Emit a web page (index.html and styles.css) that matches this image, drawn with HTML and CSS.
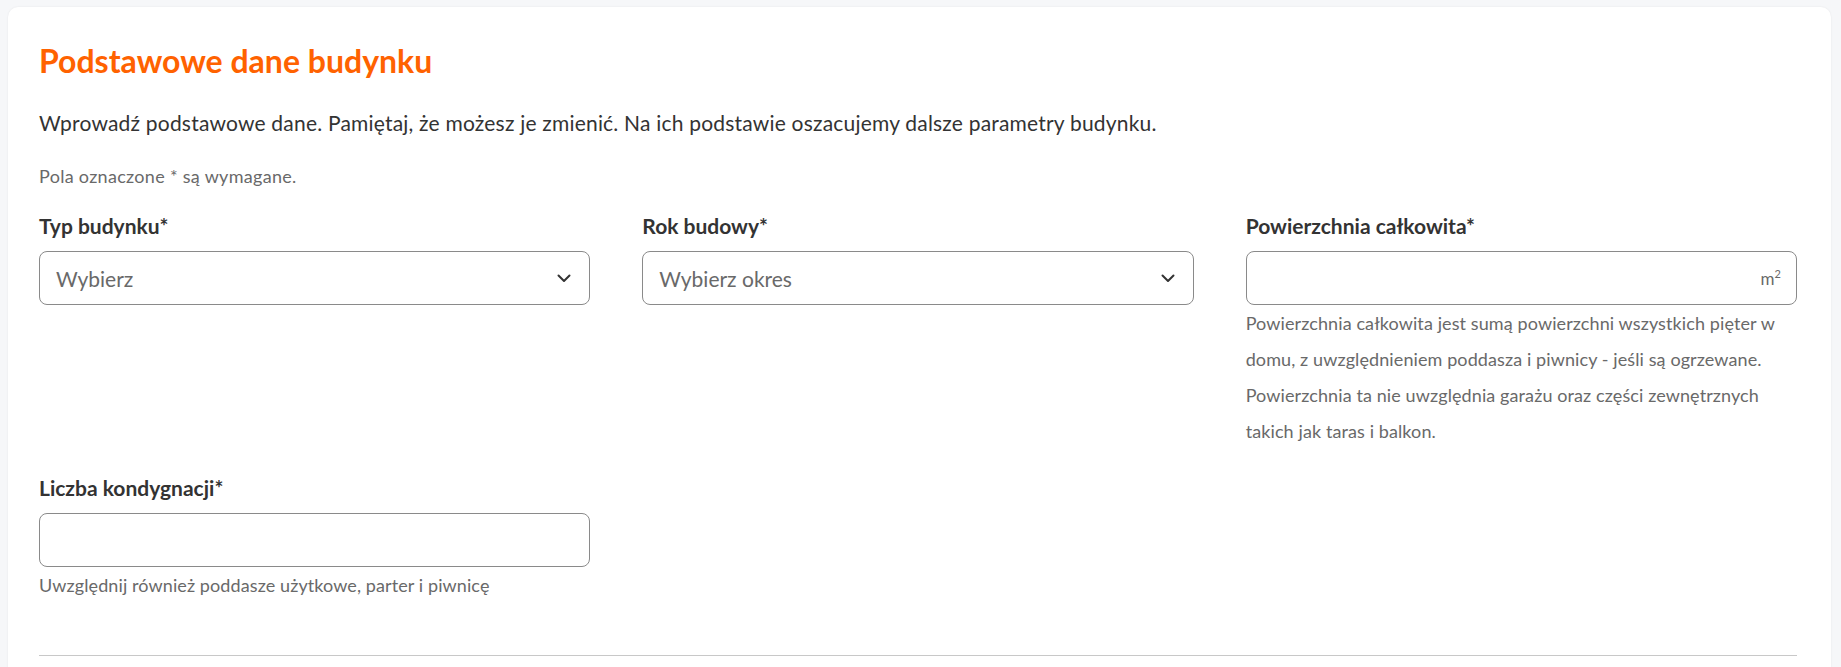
FILE: index.html
```html
<!DOCTYPE html>
<html lang="pl">
<head>
<meta charset="utf-8">
<title>Podstawowe dane budynku</title>
<link rel="stylesheet" href="styles.css">
</head>
<body>
<main class="card">
  <h1 class="title">Podstawowe dane budynku</h1>
  <p class="lead">Wprowadź podstawowe dane. Pamiętaj, że możesz je zmienić. Na ich podstawie oszacujemy dalsze parametry budynku.</p>
  <p class="required-note">Pola oznaczone * są wymagane.</p>

  <div class="grid">
    <div class="field">
      <label class="label">Typ budynku*</label>
      <div class="control select">
        <span class="placeholder">Wybierz</span>
        <svg class="chevron" width="14" height="9" viewBox="0 0 14 9" aria-hidden="true"><polyline points="1.5,1.5 7,7 12.5,1.5" fill="none" stroke="#333" stroke-width="2" stroke-linecap="round" stroke-linejoin="round"/></svg>
      </div>
    </div>

    <div class="field">
      <label class="label">Rok budowy*</label>
      <div class="control select">
        <span class="placeholder">Wybierz okres</span>
        <svg class="chevron" width="14" height="9" viewBox="0 0 14 9" aria-hidden="true"><polyline points="1.5,1.5 7,7 12.5,1.5" fill="none" stroke="#333" stroke-width="2" stroke-linecap="round" stroke-linejoin="round"/></svg>
      </div>
    </div>

    <div class="field">
      <label class="label">Powierzchnia całkowita*</label>
      <div class="control">
        <input class="input" type="text" aria-label="Powierzchnia całkowita">
        <span class="suffix">m<sup>2</sup></span>
      </div>
      <p class="help">Powierzchnia całkowita jest sumą powierzchni wszystkich pięter w domu, z uwzględnieniem poddasza i piwnicy - jeśli są ogrzewane. Powierzchnia ta nie uwzględnia garażu oraz części zewnętrznych takich jak taras i balkon.</p>
    </div>

    <div class="field">
      <label class="label">Liczba kondygnacji*</label>
      <div class="control">
        <input class="input" type="text" aria-label="Liczba kondygnacji">
      </div>
      <p class="help">Uwzględnij również poddasze użytkowe, parter i piwnicę</p>
    </div>
  </div>

  <hr class="divider">
</main>
</body>
</html>
```

FILE: styles.css
```css
* { box-sizing: border-box; }

html, body {
  margin: 0;
  padding: 0;
  background: #f6f7f9;
  font-family: Lato, "Noto Sans", "Liberation Sans", sans-serif;
  color: #333333;
}

.card {
  margin: 7px 10px 0 8px;
  background: #ffffff;
  border-radius: 10px;
  box-shadow: 0 0 2px rgba(0, 0, 0, 0.08);
  padding: 34px 34px 60px 31px;
  min-height: 720px;
}

.title {
  margin: 0;
  font-size: 32px;
  line-height: 40px;
  font-weight: 700;
  color: #ff6200;
}

.lead {
  margin: 28px 0 0;
  font-size: 21px;
  line-height: 28px;
  letter-spacing: 0.2px;
  color: #333333;
}

.required-note {
  margin: 27px 0 0;
  font-size: 18px;
  line-height: 24px;
  letter-spacing: 0.3px;
  color: #696969;
}

.grid {
  margin-top: 24px;
  display: grid;
  grid-template-columns: repeat(3, 1fr);
  column-gap: 52px;
  row-gap: 25px;
  align-items: start;
}

.field {
  display: flex;
  flex-direction: column;
}

.label {
  font-size: 21px;
  line-height: 28px;
  font-weight: 700;
  color: #333333;
  margin-bottom: 11px;
}

.control {
  height: 54px;
  border: 1px solid #8a8a8a;
  border-radius: 8px;
  background: #ffffff;
  display: flex;
  align-items: center;
  padding: 0 15px 0 16px;
}

.select {
  justify-content: space-between;
  padding-right: 18px;
}

.placeholder {
  font-size: 21px;
  color: #696969;
}

.chevron {
  display: block;
}

.input {
  flex: 1;
  min-width: 0;
  height: 100%;
  border: 0;
  outline: none;
  background: transparent;
  font: inherit;
  font-size: 20px;
  color: #333333;
  padding: 0;
}

.suffix {
  font-size: 17px;
  color: #696969;
}

.suffix sup {
  font-size: 11px;
  vertical-align: 7px;
  line-height: 0;
}

.help {
  margin: 0;
  font-size: 18px;
  line-height: 36px;
  letter-spacing: 0.1px;
  color: #696969;
}

.divider {
  margin: 52px 0 0;
  border: 0;
  border-top: 1px solid #c8c8c8;
}
```
